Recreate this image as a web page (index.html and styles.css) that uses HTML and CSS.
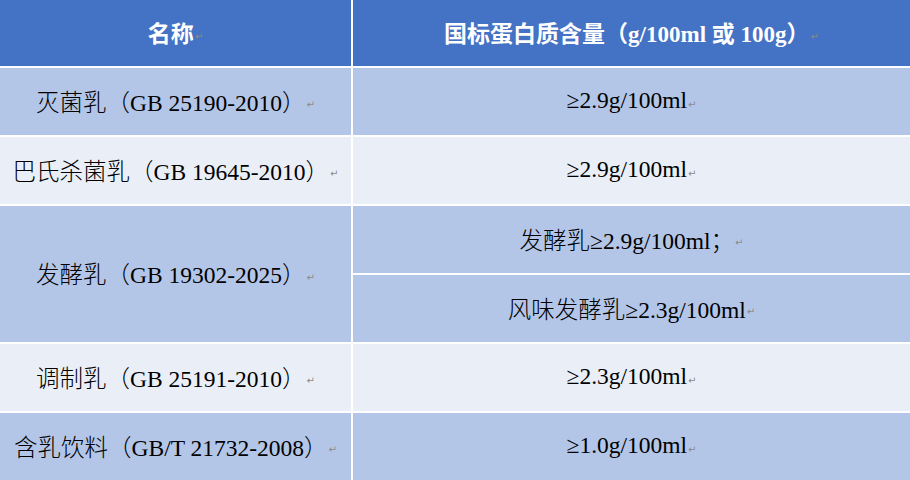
FILE: index.html
```html
<!DOCTYPE html>
<html lang="zh-CN">
<head>
<meta charset="utf-8">
<title>国标蛋白质含量</title>
<link rel="stylesheet" href="styles.css">
</head>
<body>
<div class="table">
  <div class="cell head">名称<span class="pm">↵</span></div>
  <div class="cell head">国标蛋白质含量（g/100ml 或 100g）<span class="pm">↵</span></div>

  <div class="cell dark">灭菌乳（GB 25190-2010）<span class="pm">↵</span></div>
  <div class="cell dark">≥2.9g/100ml<span class="pm">↵</span></div>

  <div class="cell light">巴氏杀菌乳（GB 19645-2010）<span class="pm">↵</span></div>
  <div class="cell light">≥2.9g/100ml<span class="pm">↵</span></div>

  <div class="cell dark span2">发酵乳（GB 19302-2025）<span class="pm">↵</span></div>
  <div class="cell dark">发酵乳≥2.9g/100ml；<span class="pm">↵</span></div>
  <div class="cell dark">风味发酵乳≥2.3g/100ml<span class="pm">↵</span></div>

  <div class="cell light">调制乳（GB 25191-2010）<span class="pm">↵</span></div>
  <div class="cell light">≥2.3g/100ml<span class="pm">↵</span></div>

  <div class="cell dark">含乳饮料（GB/T 21732-2008）<span class="pm">↵</span></div>
  <div class="cell dark">≥1.0g/100ml<span class="pm">↵</span></div>
</div>
</body>
</html>
```
FILE: styles.css
```css
html, body {
  margin: 0;
  padding: 0;
  background: #ffffff;
}
.table {
  width: 910px;
  height: 480px;
  display: grid;
  grid-template-columns: 351px 557px;
  grid-template-rows: 66px repeat(6, 67px);
  gap: 2px;
  background: #ffffff;
  font-family: "Liberation Serif", "Noto Sans CJK SC", serif;
  font-size: 23.5px;
  font-weight: 300;
  color: #000000;
}
.cell {
  display: flex;
  align-items: center;
  justify-content: center;
  white-space: nowrap;
  padding-bottom: 2px;
}
.head {
  background: #4472C4;
  color: #ffffff;
  font-weight: bold;
  font-size: 23px;
}
.dark {
  background: #B4C6E7;
}
.light {
  background: #EAEFF7;
}
.span2 {
  grid-row: span 2;
}
.pm {
  font-family: "DejaVu Sans", sans-serif;
  font-size: 10px;
  font-weight: normal;
  color: #8a8a8a;
  margin-left: 1px;
  align-self: center;
  padding-top: 8px;
}
```
